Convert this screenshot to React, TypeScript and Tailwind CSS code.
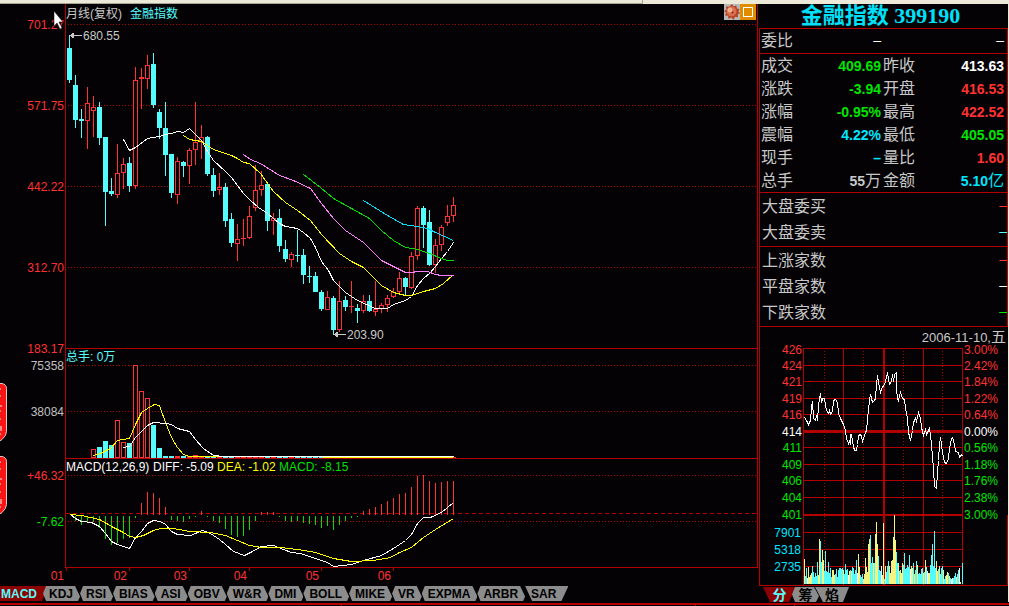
import { useState } from "react";

type Candle = [kind: "up" | "down", high: number, top: number, bottom: number, low: number];
type Point = [number, number];

const FIRST_X = 69;
const STEP = 6;

const CANDLES: Candle[] = [
  ["down", 35, 48, 80, 83], ["down", 75, 85, 120, 128], ["down", 109, 119, 121, 138], ["up", 87, 103, 121, 149],
  ["up", 96, 107, 111, 137], ["down", 102, 107, 138, 145], ["down", 137, 137, 192, 226], ["down", 178, 191, 194, 196],
  ["up", 144, 173, 195, 198], ["up", 158, 164, 173, 189], ["down", 157, 163, 186, 192], ["up", 67, 80, 186, 189],
  ["up", 68, 77, 79, 109], ["up", 55, 65, 79, 89], ["down", 53, 64, 105, 108], ["down", 109, 112, 128, 139],
  ["down", 102, 128, 155, 176], ["down", 154, 154, 193, 198], ["up", 157, 161, 195, 204], ["down", 161, 162, 166, 177],
  ["up", 148, 150, 166, 184], ["up", 102, 142, 150, 165], ["up", 125, 137, 142, 159], ["down", 136, 137, 174, 176],
  ["down", 168, 175, 191, 197], ["up", 173, 187, 190, 195], ["down", 183, 187, 221, 227], ["down", 213, 219, 243, 247],
  ["up", 224, 239, 244, 261], ["up", 219, 238, 239, 246], ["up", 206, 216, 238, 239], ["up", 165, 190, 208, 211],
  ["up", 171, 185, 190, 196], ["down", 182, 184, 221, 231], ["up", 213, 218, 221, 235], ["down", 209, 218, 246, 252],
  ["down", 240, 249, 259, 262], ["up", 252, 254, 260, 267], ["down", 230, 255, 256, 262], ["down", 249, 255, 275, 284],
  ["down", 266, 276, 277, 283], ["down", 272, 276, 292, 292], ["down", 290, 292, 309, 311], ["up", 291, 297, 310, 310],
  ["down", 296, 298, 330, 335], ["up", 281, 301, 330, 332], ["down", 296, 300, 307, 311], ["up", 281, 306, 307, 313],
  ["down", 304, 308, 311, 323], ["up", 295, 301, 311, 313], ["down", 295, 301, 311, 312], ["up", 281, 309, 312, 316],
  ["up", 303, 305, 309, 313], ["up", 295, 298, 305, 312], ["up", 288, 292, 297, 298], ["up", 272, 278, 292, 295],
  ["down", 277, 278, 287, 295], ["up", 252, 256, 288, 289], ["up", 206, 208, 256, 260], ["down", 206, 208, 225, 248],
  ["down", 210, 222, 265, 266], ["up", 239, 245, 265, 273], ["up", 225, 227, 245, 251], ["up", 205, 216, 223, 226],
  ["up", 197, 205, 216, 222],
];

// top of each volume bar from the 5th candle on, everything later is almost flat
const VOLUME_TOPS = [449, 447, 441, 445, 420, 442, 443, 365, 391, 398, 425, 448, 456, 456, 456, 456, 456, 455];

// end of each MACD bar, from the 2nd candle on
const MACD_ENDS = [
  521, 525, 523, 522, 528, 539, 545, 543, 539, 538, 518, 503, 492, 493, 498, 507, 520, 521, 522, 519, 517, 511,
  517, 521, 523, 529, 535, 537, 536, 530, 521, 512, 512, 512, 517, 521, 522, 521, 523, 524, 525, 528, 526, 530,
  525, 521, 518, 517, 511, 509, 507, 504, 501, 498, 494, 493, 487, 476, 475, 481, 483, 482, 481, 481,
];

const AVERAGES: { stroke: string; points: string }[] = [
  { stroke: "stroke-white", points: "123,139 129,150 135,147 147,138 153,137 159,136 165,134 171,133 177,131 183,132 189,128 195,134 201,140 207,151 213,160 225,171 231,177 237,185 243,193 250,200 258,207 267,213 279,223 285,226 297,228 303,232 310,238 315,247 321,261 328,270 333,280 345,292 357,300 375,308 387,308 393,304 405,300 411,296 417,285 423,278 430,272 435,266 441,258 447,251 453,242" },
  { stroke: "stroke-[#ffff00]", points: "183,135 189,139 201,141 207,145 213,149 231,155 237,158 243,162 249,163 260,173 273,191 285,202 297,210 310,220 321,234 339,253 351,261 363,267 381,285 393,292 405,295 411,295 423,291 435,288 443,283 453,274" },
  { stroke: "stroke-[#ff80ff]", points: "243,154 250,159 260,163 279,175 293,180 310,188 321,203 333,218 345,230 363,242 381,260 393,266 405,272 411,272 417,271 427,271 435,274 441,275 453,275" },
  { stroke: "stroke-[#00e000]", points: "303,174 320,187 333,198 351,208 369,218 381,230 393,240 405,247 417,249 429,253 441,258 447,260 453,260" },
  { stroke: "stroke-[#00e0ff]", points: "363,200 387,215 403,224 417,226 427,228 435,232 453,240" },
  // volume averages
  { stroke: "stroke-[#ffff00]", points: "93,455 100,453 110,448 117,440 129,438 135,424 141,412 147,408 154,404 159,405 165,422 171,437 177,447 183,454 189,456 453,457" },
  { stroke: "stroke-white", points: "123,447 129,446 135,437 147,425 153,422 165,423 171,424 177,428 189,431 195,439 203,448 213,455 223,456 453,456" },
  // DIFF and DEA
  { stroke: "stroke-white", points: "70,514 75,518 81,521 91,522 99,526 105,533 111,541 117,544 129,548 135,537 141,531 147,523 153,520 160,521 165,524 171,531 177,534 190,535 202,530 210,533 219,539 225,544 233,551 244,555 250,552 261,546 273,545 283,549 291,552 300,553 315,558 327,562 333,566 351,564 363,560 381,555 393,548 405,540 411,534 417,523 423,517 430,517 441,512 453,502" },
  { stroke: "stroke-[#ffff00]", points: "70,514 81,515 99,519 113,527 123,532 129,536 135,537 143,535 153,530 160,528 173,528 189,531 210,532 225,535 237,540 249,545 261,547 280,547 297,549 315,552 333,558 351,561 373,560 390,557 399,552 411,547 423,537 435,529 453,518" },
];

const LEFT_LABELS: { y: number; text: string; fill: string }[] = [
  { y: 24, text: "701.27", fill: "fill-[#ff3232]" },
  { y: 105, text: "571.75", fill: "fill-[#ff3232]" },
  { y: 186, text: "442.22", fill: "fill-[#ff3232]" },
  { y: 267, text: "312.70", fill: "fill-[#ff3232]" },
  { y: 348, text: "183.17", fill: "fill-[#ff3232]" },
  { y: 365, text: "75358", fill: "fill-[#c0c0c0]" },
  { y: 411, text: "38084", fill: "fill-[#c0c0c0]" },
  { y: 475, text: "+46.32", fill: "fill-[#ff3232]" },
  { y: 521, text: "-7.62", fill: "fill-[#00e000]" },
];

const YEARS = [
  { x: 66, text: "01" }, { x: 129, text: "02" }, { x: 189, text: "03" },
  { x: 249, text: "04" }, { x: 321, text: "05" }, { x: 393, text: "06" },
];

const INDICATORS = ["MACD", "KDJ", "RSI", "BIAS", "ASI", "OBV", "W&R", "DMI", "BOLL", "MIKE", "VR", "EXPMA", "ARBR", "SAR"];

const QUOTES = [
  { a: "成交", av: "409.69", ac: "text-[#00e600]", au: "", b: "昨收", bv: "413.63", bc: "text-white", bu: "" },
  { a: "涨跌", av: "-3.94", ac: "text-[#00e600]", au: "", b: "开盘", bv: "416.53", bc: "text-[#ff3232]", bu: "" },
  { a: "涨幅", av: "-0.95%", ac: "text-[#00e600]", au: "", b: "最高", bv: "422.52", bc: "text-[#ff3232]", bu: "" },
  { a: "震幅", av: "4.22%", ac: "text-[#00e6ff]", au: "", b: "最低", bv: "405.05", bc: "text-[#00e600]", bu: "" },
  { a: "现手", av: "–", ac: "text-[#00e6ff]", au: "", b: "量比", bv: "1.60", bc: "text-[#ff3232]", bu: "" },
  { a: "总手", av: "55", ac: "text-[#c8c8c8]", au: "万", b: "金额", bv: "5.10", bc: "text-[#00e6ff]", bu: "亿" },
];

const MARKET = [
  [
    { label: "大盘委买", color: "text-[#ff3232]" },
    { label: "大盘委卖", color: "text-[#54fcfc]" },
  ],
  [
    { label: "上涨家数", color: "text-[#ff3232]" },
    { label: "平盘家数", color: "text-white" },
    { label: "下跌家数", color: "text-[#00e600]" },
  ],
];

const DAY_ROWS = [
  { y: 348, price: "426", pct: "3.00%", fill: "fill-[#ff3232]", w: 1 },
  { y: 364, price: "424", pct: "2.42%", fill: "fill-[#ff3232]", w: 1 },
  { y: 380, price: "421", pct: "1.84%", fill: "fill-[#ff3232]", w: 1 },
  { y: 397, price: "419", pct: "1.22%", fill: "fill-[#ff3232]", w: 1 },
  { y: 413, price: "416", pct: "0.64%", fill: "fill-[#ff3232]", w: 1 },
  { y: 430, price: "414", pct: "0.00%", fill: "fill-white", w: 3 },
  { y: 446, price: "411", pct: "0.56%", fill: "fill-[#00e600]", w: 1 },
  { y: 463, price: "409", pct: "1.18%", fill: "fill-[#00e600]", w: 1 },
  { y: 479, price: "406", pct: "1.76%", fill: "fill-[#00e600]", w: 1 },
  { y: 496, price: "404", pct: "2.38%", fill: "fill-[#00e600]", w: 1 },
  { y: 513, price: "401", pct: "3.00%", fill: "fill-[#00e600]", w: 2 },
  { y: 531, price: "7901", pct: "", fill: "fill-[#00e6ff]", w: 1 },
  { y: 548, price: "5318", pct: "", fill: "fill-[#00e6ff]", w: 1 },
  { y: 565, price: "2735", pct: "", fill: "fill-[#00e6ff]", w: 1 },
];

const DAY_PRICE =
  "804,416 806,419 808,423 810,419 811,406 812,400 813,417 815,419 816,414 817,419 818,404 820,392 821,401 822,397 824,397 826,409 828,412 829,409 830,413 832,410 833,399 835,398 837,401 838,412 840,417 843,423 845,429 846,437 848,442 849,440 850,443 850,433 851,433 853,445 854,449 856,449 857,443 858,434 860,433 861,435 862,440 865,431 866,429 867,418 868,408 869,399 870,393 872,401 874,399 875,397 876,383 877,374 879,386 880,391 882,385 884,384 885,380 887,371 889,383 891,380 892,373 893,380 894,373 896,371 896,387 897,397 898,400 899,394 900,391 902,397 904,398 905,407 907,417 908,431 910,439 912,429 913,421 915,417 916,420 918,411 920,417 921,426 923,434 925,428 926,433 928,429 929,427 930,433 931,443 932,455 933,467 934,485 936,487 937,470 938,459 939,443 940,436 942,451 944,461 946,462 948,457 949,447 951,437 952,436 954,443 955,450 958,451 959,456 961,453 962,455";

// minute volume: height and colour (c cyan, y yellow, w white)
const DAY_VOLUME =
  "25y 8c 16c 6w 17y 7y 9y 11y 18c 12c 7c 11c 8c 22c 9y 45y 43c 22c 34y 24y 13c 33c 13c 12c 22c 11c 16c 7c 14y 14y 9y 10c 15c 7c 14c 16c 16c 15c 16c 14y 10c 20c 14c 15c 9w 13y 14c 13y 17c 16c 10c 14c 24c 11w 30y 17y 9c 7c 10c 5y 10y 26y 17y 12y 40y 45y 49c 21c 27c 21y 21c 50y 62y 40y 28c 14c 13c 18w 9y 61y 5c 18y 12c 18c 23c 18y 11y 23y 24y 47y 69y 44y 32c 21c 21y 13c 14y 11y 21y 19c 31c 15c 16c 19c 17c 29c 15w 18y 16y 21c 10y 14c 23c 19y 10c 11c 10c 15c 16c 11y 12c 24y 17c 13w 11y 11y 19c 29c 40c 18c 53c 16c 23y 13y 15c 18y 10c 16c 18c 14y 5c 8c 9y 12y 11c 8y 6c 5w 6w 6c 8c 11c 7y 10c 14c 16w 2y 0c 21c".split(" ");

const VOLUME_FILL: Record<string, string> = { c: "fill-[#54fcfc]", y: "fill-[#f4f480]", w: "fill-white" };

const toPoints = (s: string): Point[] => s.split(" ").map((p) => p.split(",").map(Number) as Point);

function Line({ points, stroke }: { points: string; stroke: string }) {
  const d = toPoints(points).map(([x, y]) => `${x + 0.5},${y + 0.5}`).join(" ");
  return <polyline points={d} className={`fill-none ${stroke}`} shapeRendering="crispEdges" />;
}

function Box({ up, x, top, bottom }: { up: boolean; x: number; top: number; bottom: number }) {
  const h = Math.max(bottom - top, 1);
  if (up && h > 2) {
    return <rect x={x - 1.5} y={top + 0.5} width={4} height={h - 1} className="fill-[#040204] stroke-[#ff3232]" />;
  }
  return <rect x={x - 2} y={top} width={5} height={h} className={up ? "fill-[#ff3232]" : "fill-[#54fcfc]"} />;
}

function KLineChart() {
  return (
    <svg className="block h-full w-full overflow-visible font-['Liberation_Sans','Noto_Sans_CJK_SC',sans-serif] text-xs" aria-label="月线">
      <g transform="translate(0 -4)" shapeRendering="crispEdges">
        <g className="stroke-[#b40000]">
          {[24, 105, 186, 267, 365, 411, 475, 521].map((y) => (
            <line key={y} x1="68" x2="100%" y1={y + 0.5} y2={y + 0.5} strokeDasharray="1 2" />
          ))}
          <line x1="66" x2="100%" y1="513.5" y2="513.5" strokeDasharray="4 3" />
          {[348, 458, 567].map((y) => (
            <line key={y} x1="65" x2="100%" y1={y + 0.5} y2={y + 0.5} />
          ))}
          <line x1="65.5" x2="65.5" y1="4" y2="568" />
          {YEARS.map((t) => (
            <line key={t.x} x1={t.x + 0.5} x2={t.x + 0.5} y1="567" y2="571" />
          ))}
        </g>

        {CANDLES.map(([kind, high, top, bottom, low], i) => {
          const x = FIRST_X + i * STEP;
          const up = kind === "up";
          return (
            <g key={i}>
              <rect x={x} y={high} width={1} height={Math.max(low - high, 1)} className={up ? "fill-[#ff3232]" : "fill-[#54fcfc]"} />
              <Box up={up} x={x} top={top} bottom={bottom} />
            </g>
          );
        })}

        {CANDLES.slice(4).map(([kind], i) => (
          <Box key={i} up={kind === "up"} x={FIRST_X + (i + 4) * STEP} top={VOLUME_TOPS[i] ?? 457} bottom={458} />
        ))}

        {MACD_ENDS.map((end, i) => {
          const x = FIRST_X + (i + 1) * STEP;
          return end < 515
            ? <rect key={i} x={x} y={end} width={1} height={515 - end} className="fill-[#ff3232]" />
            : <rect key={i} x={x} y={516} width={1} height={end - 516} className="fill-[#00e000]" />;
        })}

        {AVERAGES.map((a, i) => <Line key={i} {...a} />)}

        <path d="M70 35.5h12M70 35.5l3-2v4zM334 334.5h12M334 334.5l3-2v4z" className="fill-[#c8c8c8] stroke-[#c8c8c8]" />
      </g>

      <g transform="translate(0 -4)">
        {LEFT_LABELS.map((l) => (
          <text key={l.text} x="64" y={l.y + 5} textAnchor="end" className={l.fill}>{l.text}</text>
        ))}
        {YEARS.map((t) => (
          <text key={t.text} x={t.x - 2} y="580" textAnchor="end" className="fill-[#ff3232]">{t.text}</text>
        ))}
        <text x="83" y="40" className="fill-[#c8c8c8]">680.55</text>
        <text x="347" y="339" className="fill-[#c8c8c8]">203.90</text>
        <text x="66" y="18" className="fill-[#c8c8c8]">月线(复权)</text>
        <text x="130" y="18" className="fill-[#54fcfc]">金融指数</text>
        <text x="66" y="361" className="fill-[#54fcfc]">总手: 0万</text>
        <text x="66" y="471" className="fill-white">MACD(12,26,9)</text>
        <text x="153" y="471" className="fill-white">DIFF: -5.09</text>
        <text x="217" y="471" className="fill-[#ffff00]">DEA: -1.02</text>
        <text x="279" y="471" className="fill-[#00e000]">MACD: -8.15</text>
      </g>
    </svg>
  );
}

function DayChart() {
  return (
    <svg className="block h-[242px] w-full font-['Liberation_Sans',sans-serif] text-xs" aria-label="分时">
      <g transform="translate(-760 -342)">
        <g className="stroke-[#b40000]" shapeRendering="crispEdges">
          {DAY_ROWS.map((r) => (
            <line key={r.y} x1="803" x2="963" y1={(r.y === 348 ? 347 : r.y) + 0.5} y2={(r.y === 348 ? 347 : r.y) + 0.5} strokeWidth={r.w} />
          ))}
          {[803, 843, 923, 962].map((x) => (
            <line key={x} x1={x + 0.5} x2={x + 0.5} y1="347" y2="584" />
          ))}
          {[824, 863, 903, 942].map((x) => (
            <line key={x} x1={x + 0.5} x2={x + 0.5} y1="350" y2="584" strokeDasharray="1 2" />
          ))}
          <line x1="884" x2="884" y1="347" y2="584" strokeWidth="2" />
          <line x1="1007.5" x2="1007.5" y1="514" y2="584" />
        </g>
        {DAY_VOLUME.map((v, i) => {
          const h = parseInt(v, 10);
          return <rect key={i} x={804 + i} y={583 - h} width={1} height={h} className={VOLUME_FILL[v.slice(-1)]} />;
        })}
        <Line points={DAY_PRICE} stroke="stroke-white" />
        {DAY_ROWS.map((r) => (
          <g key={r.y} className={r.fill}>
            <text x={r.pct ? 802 : 801} y={r.y + 5} textAnchor="end">{r.price}</text>
            <text x="964" y={r.y + 5}>{r.pct}</text>
          </g>
        ))}
      </g>
    </svg>
  );
}

function SideTab({ label }: { label: string }) {
  return (
    <button aria-label={label} className="block h-[59px] w-[7px]">
      <svg viewBox="0 0 7 59" className="h-full w-full">
        <path d="M-1 .5h3q4.500 1 4.500 5v43q0 4-4.500 8l-3 2z" className="fill-[#fa1414] stroke-[#e0c8c8]" />
        <path d="M0 6h1M0 13h1M0 23h2M0 28h1M0 36h1M1 43v5M0 51h1" className="stroke-white" />
      </svg>
    </button>
  );
}

export default function App() {
  const [indicator, setIndicator] = useState("MACD");
  const [view, setView] = useState("分");

  return (
    <div className="relative overflow-hidden bg-[#040204] font-['Liberation_Sans','Noto_Sans_CJK_SC',sans-serif]">
      <div className="flex h-1 bg-[#ece9d8]">
        <div className="w-[643px] border-r border-b border-[#a8a494]" />
      </div>

      <div className="flex border-r border-[#ece9d8]">
        <main className="min-w-0 flex-1">
          <div className="relative h-[564px] border-r border-[#b40000]">
            <KLineChart />

            {/* window buttons */}
            <div className="absolute top-0 right-px flex">
              <button aria-label="设置" className="size-4 bg-[#b8b8b8]">
                <svg viewBox="0 0 16 16" className="size-4">
                  <path d="M8 0l1.500 2.500 3-1 .2 3L15.500 5l-1.200 2.500L16 9l-2.300 1.200.3 3-3-.4L9.500 16l-2-2.500-3 1.200-.4-3L1 11.500l1-2.700L0 7l2.500-1.500L2 2.500l3.200.2z" className="fill-[#b84020]" />
                  <circle cx="7.500" cy="7.500" r="5" className="fill-[#d87050]" />
                  <circle cx="6" cy="6" r="2.500" className="fill-[#f0b090]" />
                  <circle cx="8.500" cy="8.500" r="1" className="fill-[#902010]" />
                </svg>
              </button>
              <button aria-label="最大化" className="size-4 bg-[#e08c00] p-[3px]">
                <span className="block size-full border border-white" />
              </button>
            </div>

            {/* mouse pointer */}
            <svg viewBox="0 0 11 19" className="absolute top-[7px] left-[53px] h-[19px] w-[11px]">
              <path d="M1 0v15l3-3 3 6 2-1-3-6h4z" className="fill-white stroke-[#040204]" strokeWidth=".5" />
            </svg>
          </div>

          <nav className="mt-[18px] flex h-[15px] text-xs leading-4 font-bold">
            {INDICATORS.map((name, i) => (
              <button
                key={name}
                onClick={() => setIndicator(name)}
                className={`${
                  i === 0
                    ? "-mr-1.5 pr-3 pl-px [clip-path:polygon(0_0,100%_0,calc(100%-7px)_100%,0_100%)]"
                    : i === INDICATORS.length - 1
                      ? "pr-3 pl-1.5 [clip-path:polygon(0_0,100%_0,calc(100%-7px)_100%,7px_100%)]"
                      : "pr-[7px] pl-1.5 [clip-path:polygon(3px_0,calc(100%-5px)_0,100%_70%,calc(100%-2px)_100%,3px_100%,0_50%)]"
                } ${indicator === name ? "bg-[#8c0000] text-[#54fcfc]" : "bg-[#8c8c8c] text-black"}`}
              >
                {name}
              </button>
            ))}
          </nav>
        </main>

        <aside className="ml-px w-[249px] shrink-0">
          <h1 className="flex h-6 items-center justify-center pr-1.5 font-['Liberation_Serif','Noto_Sans_CJK_SC',serif] text-[22px] leading-6 font-bold whitespace-pre text-[#00e0f8]">
            金融指数 399190
          </h1>

          <div className="border border-[#b40000]">
            <div className="flex h-[25px] items-center border-b border-[#b40000] pr-[3px] pl-px text-base leading-6 text-[#c8c8c8]">
              <span className="flex-1">委比</span>
              <span className="pb-0.5 text-sm leading-5 text-white">–</span>
              <span className="w-[123px] pb-0.5 text-right text-sm leading-5 text-white">–</span>
            </div>
            <dl>
              {QUOTES.map((q) => (
                <div key={q.a} className="flex h-[23px] items-center pr-[3px] pl-px text-base leading-6 text-[#c8c8c8]">
                  <dt>{q.a}</dt>
                  <dd className={`flex flex-1 items-center justify-end pr-0.5 text-sm font-bold ${q.ac}`}>
                    {q.av}<span className="text-base leading-6 font-normal">{q.au}</span>
                  </dd>
                  <dt>{q.b}</dt>
                  <dd className={`flex w-[89px] items-center justify-end text-sm font-bold ${q.bc}`}>
                    {q.bv}<span className="text-base leading-6 font-normal">{q.bu}</span>
                  </dd>
                </div>
              ))}
            </dl>
          </div>

          {MARKET.map((group) => (
            <dl key={group[0].label} className="border border-t-0 border-[#b40000] pt-px">
              {group.map((m) => (
                <div key={m.label} className="flex h-[26px] items-center justify-between pl-0.5 text-base leading-6">
                  <dt className="text-[#c8c8c8]">{m.label}</dt>
                  <dd className={`pb-1 text-sm leading-5 ${m.color}`}>–</dd>
                </div>
              ))}
            </dl>
          ))}

          <section className="border-b border-l border-[#b40000]">
            <p className="h-4 pr-0.5 text-right text-[13px] leading-5 text-[#c8c8c8]">
              2006-11-10,<span className="text-[15px] leading-5">五</span>
            </p>
            <DayChart />
          </section>

          <nav className="mt-px flex h-[15px] pl-1 text-sm leading-4 font-bold">
            <button onClick={() => setView("分")} className={`w-[33px] [clip-path:polygon(0_0,100%_0,calc(100%-7px)_100%,7px_100%)] ${view === "分" ? "bg-[#8c0000] text-[#54fcfc]" : "bg-[#8c8c8c] text-black"}`}>分</button>
            <button onClick={() => setView("筹")} className={`-ml-1 w-[27px] [clip-path:polygon(3px_0,calc(100%-5px)_0,100%_60%,calc(100%-3px)_100%,3px_100%,0_50%)] ${view === "筹" ? "bg-[#8c0000] text-[#54fcfc]" : "bg-[#8c8c8c] text-black"}`}>筹</button>
            <button onClick={() => setView("焰")} className={`-ml-1 w-[34px] [clip-path:polygon(0_0,100%_0,calc(100%-6px)_100%,8px_100%)] ${view === "焰" ? "bg-[#8c0000] text-[#54fcfc]" : "bg-[#8c8c8c] text-black"}`}>焰</button>
          </nav>
        </aside>
      </div>

      <footer className="mt-px h-1 border-t-2 border-[#b40000]">
        <svg className="block h-0.5 w-full" shapeRendering="crispEdges">
          <path d="M341.500 0v2M695.500 0v2M794.500 0v2" className="stroke-[#b40000]" />
          <path d="M329.500 1v1M682.500 1v1M782.500 1v1" className="stroke-[#54fcfc]" />
          <path d="M344.500 1v1M699.500 1v1M705.500 1v1M799.500 1v1M805.500 1v1" className="stroke-[#f4f480]" />
        </svg>
      </footer>

      {/* collapsed drawers on the window edge */}
      <div className="absolute top-[383px] left-0 flex flex-col gap-[14px]">
        <SideTab label="展开上栏" />
        <SideTab label="展开下栏" />
      </div>
    </div>
  );
}
